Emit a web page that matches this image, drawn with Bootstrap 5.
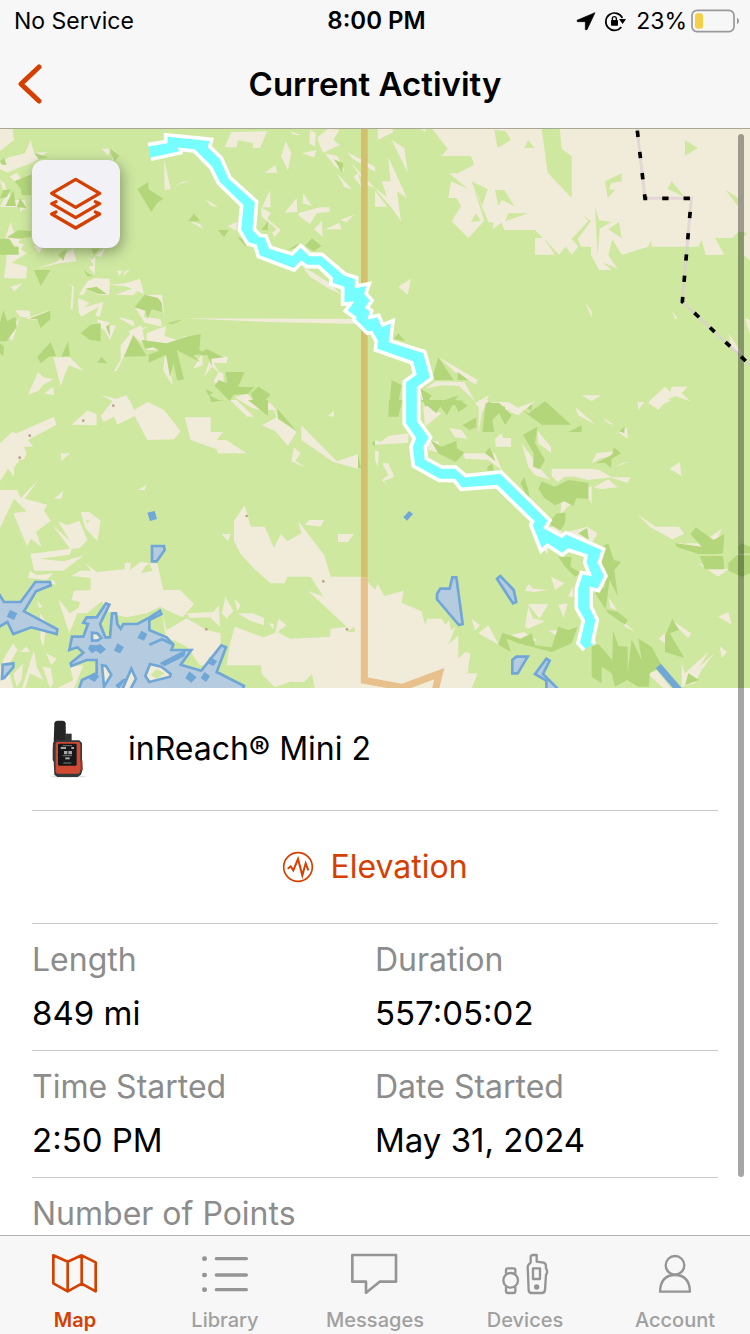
<!DOCTYPE html>
<html lang="en">
<head>
<meta charset="utf-8">
<meta name="viewport" content="width=device-width, initial-scale=1">
<title>Current Activity</title>
<link href="https://cdn.jsdelivr.net/npm/bootstrap@5.3.0/dist/css/bootstrap.min.css" rel="stylesheet">
<style>
  :root { --accent: #d54000; --bar: #f7f7f7; --rule: #c8c8c8; --muted: #8c8c8c; }
  body { font-family: Inter, "Liberation Sans", sans-serif; color: #000; background: #fff; }
  svg { display: block; flex: none; }
  .topbar { background: var(--bar); border-bottom: 1px solid #a9a795; }
  .status-row { display: grid; grid-template-columns: 1fr auto 1fr; height: 40px; padding: 0 11px 0 14px; font-size: 23px; line-height: 42px; }
  .clock { font-size: 24px; }
  .title-row { display: grid; grid-template-columns: 64px 1fr 64px; height: 88px; }
  .title-row h1 { font-size: 33px; line-height: 88px; font-weight: 600; }
  .accent, .accent:hover { color: var(--accent); }
  .plain-btn { background: none; border: 0; padding: 0; }
  .map-view svg.terrain { width: 100%; height: auto; }
  .layers-btn { top: 31px; left: 32px; width: 88px; height: 88px; background: #f2f1f6; border: 0; border-radius: 12px; box-shadow: 2px 4px 14px rgba(0,0,0,.35); }
  .thumb { top: 5px; right: 6px; width: 6px; bottom: 58px; border-radius: 3px; background: rgba(0,0,0,.35); }
  .details { padding: 0 32px; font-size: 32px; line-height: 48px; }
  .ruled { border-bottom: 1px solid var(--rule); }
  .device-row { height: 123px; gap: 24px; }
  .elev-btn { height: 113px; gap: 16px; }
  .stats { margin: 0; padding: 12px 0 13px; }
  .stats dt { font-weight: 400; color: var(--muted); margin-bottom: 5px; }
  .stats dd { margin: 0; font-size: 33px; }
  .tabs { background: var(--bar); border-top: 1px solid #b2b2b2; }
  .tabs a { flex: 1 1 0; padding: 14px 0 2px; gap: 10px; color: #a0a0a0; font-size: 20px; line-height: 24px; font-weight: 500; text-decoration: none; }
  .tabs a svg { color: #959595; }
  .tabs a.active, .tabs a.active svg { color: var(--accent); }
  .tabs a.active { font-weight: 600; }
</style>
</head>
<body>
<div class="d-flex flex-column vh-100">
  <header class="topbar flex-shrink-0">
    <div class="status-row">
      <span>No Service</span>
      <span class="clock fw-semibold">8:00 PM</span>
      <span class="d-flex align-items-center justify-content-end">
        <svg width="20" height="20" viewBox="39 32 60 60"><path d="M96 37 72 88 67 88 67 64 43 64 42 60Z" fill="#000" stroke="#000" stroke-width="2" stroke-linejoin="round"/></svg>
        <svg class="mx-2" width="24" height="24" viewBox="132 25 72 72"><path d="M184 79A26 26 0 1 1 187 52" fill="none" stroke="#000" stroke-width="5"/><path d="M177 55h21l-10 15z"/><rect x="153" y="58" width="21" height="17" rx="2"/><path d="M157 59v-5a6 6 0 0 1 12 0v5" fill="none" stroke="#000" stroke-width="4"/></svg>
        <span>23%</span>
        <svg class="ms-1" width="48" height="24" viewBox="393 23 144 72"><rect x="396" y="27" width="126" height="64" rx="15" fill="none" stroke="#999" stroke-width="5"/><rect x="405" y="36" width="24" height="46" rx="8" fill="#f7cf46"/><path d="M531 49q6 3 6 10t-6 10z" fill="#999"/></svg>
      </span>
    </div>
    <div class="title-row">
      <button class="plain-btn accent ps-3" type="button" aria-label="Back"><svg width="28" height="40" viewBox="0 0 28 40"><path d="M23 3 5 20 23 37" fill="none" stroke="currentColor" stroke-width="5" stroke-linecap="round" stroke-linejoin="round"/></svg></button>
      <h1 class="m-0 text-center">Current Activity</h1>
    </div>
  </header>

  <main class="position-relative flex-grow-1 overflow-hidden">
    <section class="map-view position-relative">
      <svg class="terrain" viewBox="0 0 2250 1677" role="img" aria-label="Map with recorded track">
        <rect width="2250" height="1680" fill="#cee8a0"/>
        <!-- north-west terrain -->
        <g transform="translate(0 -27)">
          <g fill="#f1ebd9">
            <path d="M0 24H37L42 60 0 93ZM0 128 28 112 75 100 92 60 102 98 142 96 96 130 60 142 22 158 0 148ZM304 86 330 86 326 108ZM334 84 358 104 338 122ZM492 116 512 208 494 210ZM512 210 545 186 570 183 540 192ZM615 236 655 261 634 258ZM565 302 600 312 610 327ZM683 318 712 305 708 332Z"/>
            <path d="M694 36 802 34 780 84 758 84 760 70 714 60 710 82 674 82ZM858 64 874 100 864 152 843 108ZM794 158 826 136 832 158ZM810 210 812 262 786 262ZM782 262 812 278 802 296 842 330 824 352 816 338 830 328 786 290ZM854 278 890 234 892 276ZM910 220 936 258 908 250ZM894 280 960 262 988 262 990 276 950 280 930 312 900 290ZM942 328 966 302 968 350ZM975 328 1018 308 1024 328ZM1020 300 1062 284 1040 306ZM906 100 950 90 942 112ZM930 30 948 40 944 80 928 70ZM870 34 902 45 880 44ZM952 52 986 26 1018 30 1000 60 1020 75 970 98 960 78ZM975 100 1012 108 1035 155 1006 140ZM1010 160 1056 208 1034 202ZM1040 95 1125 140 1125 155 1060 118ZM1050 125 1125 205 1100 195ZM1060 170 1075 160 1084 200ZM908 440 940 458 990 490 1022 522 985 505 930 470Z"/>
            <path d="M32 306 44 345 66 350 54 368 72 372 62 390 50 378 18 384 14 360ZM22 392 60 386 80 400 35 428 82 440 78 476 12 474ZM102 378 132 372 118 400ZM106 446 170 425 218 385 230 424 180 430ZM256 400 274 420 316 382 304 410 286 408 284 466 266 440 282 436ZM32 502 68 488 44 514ZM350 452 368 452 358 468ZM366 470 376 452 390 450ZM202 490 222 500 218 570 212 566 216 500ZM236 526 262 484 284 474 330 476 328 524 296 524 258 508 252 524ZM234 534 268 548 254 562 310 545 300 590 286 588 296 560 244 590 236 578ZM326 494 376 490 420 476 432 522 412 514 400 526 344 524 396 506 372 498ZM428 526 486 524 494 596 484 548ZM46 570 90 572 90 594 60 590ZM76 596 150 570 110 600ZM404 560 438 572 430 590 482 598 486 620 434 608ZM356 590 400 602 404 620 360 596ZM290 598 330 608 320 636 300 622ZM306 618 348 616 330 660ZM362 676 392 640 444 618 400 650 350 754 342 752 362 720ZM0 600 10 610 0 622ZM60 590 38 662 20 650ZM160 712 210 712 250 752 206 736 182 798ZM114 756 130 772 160 778 128 796 116 812 84 824ZM160 800 162 826 132 820ZM440 640 498 618 494 648 530 660 560 648 580 690 540 676 490 690 440 690ZM384 634 424 616 438 680ZM494 710 508 710 518 796 490 752ZM580 746 606 700 608 736ZM612 770 636 700 684 712 680 730 640 728 660 760 636 740ZM656 756 670 760 672 798 640 786ZM616 802 638 846 632 840ZM704 832 742 820 780 870 756 864ZM780 846 812 850 830 870 800 870ZM304 826 348 836 380 826 400 868 330 870 342 846Z"/>
            <path d="M550 595 1083 597 1083 612 800 606ZM28 170 50 158 64 176 44 184ZM64 176 92 160 94 226 80 180ZM20 212 44 240 74 240 80 262 60 276 60 262 0 260 14 232ZM0 180 14 190 26 226 12 220Z"/>
          </g>
          <g fill="#b3d67b">
            <path d="M102 98 146 112 116 118ZM44 184 94 162 94 226 66 226 62 206ZM10 210 32 208 20 232 0 234ZM16 258 40 210 48 258ZM50 262 60 234 80 264ZM0 124 12 114 20 134 6 134ZM412 208 444 186 446 208 490 236 472 248 454 276ZM330 84 358 106 344 124 334 104ZM582 280 600 304 565 304ZM654 330 686 330 672 352ZM804 304 804 330 784 330ZM862 390 906 366 904 378ZM936 355 964 378 942 394 915 378ZM1002 118 1030 130 1026 158ZM712 352 740 358 738 380ZM20 352 56 330 94 334 94 350 56 356ZM0 356 28 356 44 382 56 380 56 404 0 404ZM174 404 200 388 190 422ZM274 386 300 386 282 404ZM102 450 152 450 122 498ZM250 450 280 470 262 468ZM256 506 290 500 320 522 296 522ZM404 562 434 524 474 534 486 550 486 576 456 568 442 596 436 572ZM0 606 10 570 22 604 46 590 50 622 20 664 0 664ZM88 596 150 572 152 596 122 624 112 598ZM242 640 272 614 302 610 302 664 270 660ZM318 620 328 612 330 650ZM500 610 548 598 520 612ZM372 710 400 644 440 708ZM424 660 500 670 560 650 602 642 598 690 620 700 580 706 600 726 530 690 552 778 532 782 520 730 510 772 498 704 446 728 446 704 478 692 460 682 436 686ZM598 706 618 686 672 712 634 716 636 740 622 706ZM112 710 152 666 168 708 146 710 122 730ZM184 710 204 664 210 708ZM292 728 304 710 322 730ZM0 670 12 680 10 708 0 700ZM644 798 656 780 682 790 676 756 734 756 714 800 762 802 744 822 700 824 690 844ZM752 820 776 800 812 824 790 846 760 840ZM616 808 640 818 628 826 660 842 636 846Z"/>
          </g>
        </g>
        <!-- north-east terrain -->
        <g transform="translate(1125 -27)">
          <path fill="#f1ebd9" d="M170 24H1125V340L1090 335 1072 354H1020L1048 404 992 406 980 360 970 380H830L828 360 820 380 740 404 712 358 700 406 728 446 682 426 710 450H672L648 404 648 380H618L608 356 648 304 624 284 640 304 590 356 610 380 590 404 572 380 552 404 506 354 540 404H480V354H504L480 330H388L380 308 352 328 356 308 340 306 290 184 328 302 280 354 230 304 258 258 244 234H220L228 184 278 206 222 160 248 160 298 134 288 108H200L218 86Z"/>
          <path fill="#f1ebd9" d="M8 24H50L55 36 8 60ZM130 24H152V36ZM50 60 88 84 98 158ZM40 112 96 234 66 214 78 304 50 264 0 206 0 204 36 232 20 184H46ZM0 212 36 260H0ZM70 500 108 476 98 524ZM630 546 650 574V594ZM890 572 908 596H900ZM1060 640 1105 705 1070 684ZM1106 350 1125 330V422L1106 406ZM1110 594 1125 600V645ZM190 710 308 780 302 794 240 756ZM182 784 268 786 300 844 252 798 200 796 150 806ZM620 826H678L650 844ZM820 846 870 800 886 816 890 800H938L920 820 946 844 900 828 870 844 850 870ZM788 846H808L790 870ZM130 800 180 870H150ZM300 850 342 826 320 870ZM350 846H400L440 870H370Z"/>
          <path fill="#cee8a0" d="M500 24H554L560 86 590 108V234L518 158ZM358 30 392 34 408 60 368 84ZM460 60 478 84H448ZM930 60 968 84 930 108ZM690 184 740 160V184L708 190 702 208 720 210 698 234ZM890 184 930 232 878 206ZM1052 210 1090 235 1088 258ZM290 184 338 208 322 256ZM360 210H388L418 258 380 240 370 258ZM302 280 318 302 288 306ZM400 280 460 280 390 304ZM660 260 672 300 708 306 674 326 668 406ZM700 328 732 306 740 354Z"/>
          <path fill="#b3d67b" d="M190 712 236 780H170ZM248 756 280 780H248ZM50 780 80 796 66 870H42ZM56 656 70 640 90 664ZM136 806 170 826 160 844 190 846 150 860ZM200 844 250 826 240 840 268 842 220 862ZM340 846 390 860V870H336ZM456 866 470 846V870ZM500 850 522 850 506 870Z"/>
        </g>
        <!-- south-west terrain -->
        <g transform="translate(0 813)">
          <path fill="#f1ebd9" d="M340 0H390L402 30 444 6 492 30 542 94 522 118 442 120 404 48 352 74 342 50 310 66 302 48ZM214 74 262 32 290 42V76ZM0 130 36 96 50 100 162 50 170 74 84 120 100 140 72 140 80 160 72 178H60L42 204V230L24 206 0 244ZM182 160H210L184 184ZM0 270H52L62 294 118 236 74 296 142 314 132 332 152 362 108 396 124 440 92 416 82 440 92 464 34 342 90 462 210 446 158 376 210 422 174 364 202 376 238 362 262 420 240 444 214 448 210 464 120 476 190 484 252 466 190 512 102 512 92 464 40 340 80 334 42 296 0 384ZM162 296 190 272 184 296ZM414 270 440 254 434 270ZM242 336H268L302 362 292 424 256 384ZM554 52H632V96H670L660 108 740 160H654L650 148 572 120ZM690 0H710L762 50H742ZM806 0 836 50 890 96 864 138 826 94 786 76 830 52ZM904 76 1010 184 1074 162V206L1000 186 904 120ZM984 48 1002 32V50ZM882 142 902 160 886 182 920 204 874 184ZM664 402H692L684 424ZM734 316 752 380H794L822 444 842 402 862 424 904 400 894 362 972 464 992 530H862L854 550H812L764 508 722 462 702 424V362ZM914 374 928 360H972L962 380ZM1014 402H1062L1044 426H1014ZM932 530H1090L1125 570V865H944L936 822 912 846 870 846 824 862 784 820V796H680L688 740 704 680 790 712 832 696 870 716 990 710 992 686 1040 680 924 572 970 590ZM254 488 290 516 374 508V488H392L390 510 422 486 452 490 472 490 490 570H540L582 612 548 652 520 640 480 620 440 640 380 652 330 640 306 604 260 640H230L240 606 214 600 222 572 272 570V534L214 528 240 512 274 512ZM90 512 110 526 160 520 140 540 84 534ZM134 546 160 540 170 555ZM174 596 210 640 240 620 208 700ZM110 600 128 620 118 624ZM486 640 500 690 560 655 620 690 662 700V734L640 800 600 796 560 740 520 720 500 730ZM560 640 640 636 656 616 660 680 630 652 570 654ZM676 590 700 632 680 656 666 640ZM704 596 722 616 712 634ZM714 640 760 640 792 654V676L750 662ZM806 670 822 672 820 688ZM836 656 860 676 840 690 824 704ZM120 640 140 670 130 740 122 720ZM138 760 170 776 154 796ZM60 756 80 740 90 756ZM0 800 20 760 40 730 52 750 24 800 40 865H0ZM40 822 70 790 64 840 50 860ZM102 750 110 800 130 840 90 820 76 865 66 865ZM128 800 152 804 160 850 150 865ZM210 800 250 796 222 865 170 865 220 840Z"/>
          <path fill="#cee8a0" d="M258 360 270 362 260 370ZM650 120 666 100 684 120ZM1040 696 1064 680V696ZM434 500 448 490 458 512 424 520ZM700 800H760L720 865H680Z"/>
          <path fill="#b3d67b" d="M630 0H672L636 6ZM744 0H804V48ZM832 26 890 94 834 56ZM1074 162 1083 204H1074ZM1115 130 1125 122V140Z"/>
          <g fill="#b5cbe0" stroke="#70a7d7" stroke-width="8">
            <path d="M-10 570 12 606H62L106 546H150L152 556 108 574 72 634 172 688 170 702 94 682 40 702 22 666-10 685Z"/>
            <path d="M6 836 8 794 40 790V802L12 834Z" />
            <path d="M236 870 246 840 290 820V780H260L214 798 212 790 250 758 232 742 208 750 216 710H250L264 672 250 668 260 652H290L318 610 328 614 300 672 316 712H330L336 640H348L352 672 362 686 370 672H412L446 654 480 632 484 642 448 660V690L500 712 520 734 514 750H574L542 794 604 812 664 736 678 742 650 816 732 858 728 870Z"/>
            <path d="M456 438H492L494 450 470 484H456Z"/>
          </g>
          <g fill="#f1ebd9" stroke="#70a7d7" stroke-width="8"><path d="M276 698 292 700 304 714 292 722H276ZM306 796 318 798 334 824 312 860ZM366 870 394 806 408 836 390 870ZM436 828 450 792 484 800 512 822 510 830 448 846Z"/></g>
          <path d="M452 824 470 808 494 820 470 836Z" fill="#cee8a0"/>
          <path d="M448 734 486 718 516 732M482 792 552 756 550 766 490 796" fill="none" stroke="#70a7d7" stroke-width="8"/>
          <g fill="#70a7d7"><path d="M442 338 464 333 471 357 450 363ZM30 630 52 640 42 660 20 650ZM424 692 442 702 432 722 412 714ZM352 730 372 742 360 760 342 752ZM270 734 292 736 300 732 318 748 302 762 288 752 276 760 264 746ZM280 818 298 828 284 846 266 836ZM568 814 590 832 574 848 556 834ZM614 816 630 828 618 846 602 834ZM630 770 652 784 640 798 620 788ZM346 856 368 838 380 834 356 868Z"/></g>
          <g fill="#b89f8a"><circle cx="340" cy="17" r="4"/><circle cx="250" cy="62" r="4"/><circle cx="89" cy="107" r="4"/><circle cx="59" cy="173" r="4"/><circle cx="740" cy="348" r="4"/><circle cx="970" cy="544" r="4"/><circle cx="1041" cy="688" r="4"/><circle cx="619" cy="688" r="4"/></g>
        </g>
        <!-- south-east terrain -->
        <g transform="translate(1125 813)">
          <path fill="#f1ebd9" d="M-20 552 0 570 8 552 28 588 86 572 80 608 140 634 150 674 158 656H200L212 674 222 660 228 690 242 680 220 734 250 706V776L270 756 286 760 278 820H308L290 865H-20ZM0 120 18 126 40 108 100 100V128L0 134ZM22 190H40L58 230 26 244 48 268 20 240 40 226ZM0 150 12 155 8 200 0 180ZM145 20 200 40 150 80ZM155 120 190 125 200 160 160 150ZM222 84 260 90 278 116 240 112ZM312 0 340 0 320 40 310 106ZM360 116 380 100 384 114H408V140H362ZM264 160H360L382 212 340 180 270 176ZM400 34 480 4 430 46ZM456 40 478 30 470 50ZM486 90 528 142V158L490 130ZM440 130 470 170 490 200 526 240 480 226 460 200ZM530 206H650L674 210 710 232 640 240 600 230 570 230 548 246 530 228ZM704 232H768L756 248ZM650 190 664 160 720 154 700 170 674 176ZM700 210 740 190 768 184 720 200ZM656 262 700 238 728 262 700 264 680 268ZM560 300 590 308 556 344ZM884 206 914 186 920 228ZM732 98 756 82 758 116ZM600 20 662 74 610 46ZM680 52 720 76 700 70ZM790 10 804 6 792 26ZM820 10 850 0H890L862 14 852 28ZM786 342 842 380H912L928 402 892 418 826 382ZM510 380 556 380 562 400 600 390 636 380 668 400 650 430 580 410ZM500 440 520 430 518 464ZM528 530 568 550 540 570ZM450 572 460 552 476 566 520 570 476 576ZM458 612H520L494 656ZM460 620 474 655 510 664 460 686 450 680ZM550 614 578 610 566 654ZM290 656 316 676 300 692ZM310 700 340 676 372 734ZM410 704 446 696 486 720 450 734ZM520 692 548 690 546 708ZM700 590 726 630 706 624ZM730 650 778 694 750 680ZM712 690 718 760ZM850 716 870 700V730ZM890 660 948 700 940 715 900 676ZM1030 650 1060 636 1070 674ZM1034 738 1056 756 1040 774ZM970 490 1060 508 1030 530ZM930 430 980 430 1040 386 1020 440 1040 440 1020 455ZM906 428 960 436 920 440ZM920 790 930 820 1000 756 974 800 1018 760 980 810 960 850 920 860ZM816 820 846 812 888 865H866ZM580 590 592 560 596 590ZM658 570 690 572 670 575ZM640 262 650 258V312L640 295Z"/>
          <path fill="#b3d67b" d="M42 0H82L70 50H40ZM136 0H180L240 0 216 46 196 20 184 40ZM238 10 260 4 278 18 250 36ZM332 10 372 8 410 46 390 74 372 40 352 60 358 96H322ZM262 76 304 52V82L284 90ZM440 30 460 40 510 4 540 30 588 74H500ZM444 104 488 80 480 130 510 180 494 208 474 200 476 160ZM580 96 620 76V96ZM734 94 748 80V100ZM166 120 200 140 244 122 246 144 268 158 242 186 190 160ZM344 142 362 184 330 160ZM338 200 352 190 356 212H336ZM448 230 436 250 466 310 460 270ZM490 266 500 244 540 260 580 240 640 248V296L604 294 596 318 568 304 540 316 508 294ZM662 190 712 164 716 142 738 160 710 176 708 204 690 188ZM545 340 572 338 570 370 556 392 520 370ZM636 384 642 420 610 400ZM550 470 590 470 586 500 620 520 600 530 570 500ZM680 440 700 430 716 480 738 486 718 510 728 588 704 540 692 628 728 636 758 660 750 674 700 640 660 580 690 560 680 500ZM962 382 1016 420 1048 402 1044 460 1020 462H970L904 440 902 430 980 440 946 402ZM974 468H1044L1048 508H990ZM1060 490 1085 466 1125 466V520L1100 530 1060 512ZM1090 440 1100 430 1125 440V460L1092 462ZM382 698 436 716 470 700 480 736 530 742 550 680 580 690 608 680 590 730 530 756 430 730 394 716 408 756 370 734ZM650 740 670 732 712 780 714 690 730 738 758 740V820L770 718 800 780 790 716 830 740 860 796 824 820 822 860H790L756 840 720 860 710 820 680 800V850L650 830ZM870 708 892 656 912 690 884 700 928 774 870 756ZM940 820 972 840 930 856Z"/>
          <g fill="#b5cbe0" stroke="#70a7d7" stroke-width="8"><path d="M232 532H244L263 672 252 675 186 598V582L196 566H224ZM366 536 376 528 416 570 424 606 414 610ZM412 780 424 770H458L428 820H412ZM514 776 524 782 504 822 552 870H514V842L480 822Z"/><path d="M85 352 102 333 114 342 96 362Z" fill="#70a7d7" stroke="none"/><path d="M850 798 912 870" stroke-width="20"/></g>
        </g>
        <!-- state line and boundary -->
        <path d="M1093 0V1345" fill="none" stroke="#d4bf6c" stroke-width="20"/>
        <path d="M1093 1345V1654L1208 1675 1318 1634 1304 1690" fill="none" stroke="#e8c08b" stroke-width="21"/>
        <path d="M1911 -5 1935 208H2074L2047 518 2250 708" fill="none" stroke="#dccfd2" stroke-opacity=".7" stroke-width="9"/>
        <path d="M1912 5 1935 208H2074L2047 518 2250 708" fill="none" stroke="#000" stroke-width="11" stroke-dasharray="19 45"/>
        <!-- recorded track: fill, then its two white edges -->
        <path fill="#76fdff" d="M444 47 497 38V17L635 31 629 53 664 87 690 146 770 218 763 301 780 319 798 321 811 355 876 375 902 349 930 376H966L1035 435 1070 446V471L1108 464 1098 493 1116 515 1102 535 1115 545 1110 565 1136 559 1148 588 1179 575 1172 636 1274 668 1296 748 1256 776V875L1292 925 1276 953 1279 989 1325 1014H1367L1397 1040 1503 1029 1650 1174 1637 1195 1685 1221 1698 1211 1811 1260 1798 1300 1818 1341 1796 1385 1773 1379V1433L1792 1473 1778 1538 1786 1543 1752 1563 1734 1543 1750 1475 1729 1438V1378L1744 1331 1768 1335 1754 1300 1758 1280 1705 1263 1687 1278 1642 1249 1623 1266 1592 1187 1598 1178 1490 1073 1383 1081 1363 1055 1317 1054 1240 1011 1233 953 1243 928 1213 885V757L1244 735 1235 701 1126 663 1129 638 1114 611 1102 613 1062 573 1064 566 1036 546 1052 523 1028 525V477L993 466V448L956 413H922L904 401 882 423 775 383 766 351 743 345 718 303 725 230 656 163 632 116 582 66 541 62 543 71 453 91Z"/>
        <g fill="none" stroke="#fff" stroke-width="11">
          <path d="M444 47 497 38V17L635 31 629 53 664 87 690 146 770 218 763 301 780 319 798 321 811 355 876 375 902 349 930 376H966L1035 435 1070 446V471L1108 464 1098 493 1116 515 1102 535 1115 545 1110 565 1136 559 1148 588 1179 575 1172 636 1274 668 1296 748 1256 776V875L1292 925 1276 953 1279 989 1325 1014H1367L1397 1040 1503 1029 1650 1174 1637 1195 1685 1221 1698 1211 1811 1260 1798 1300 1818 1341 1796 1385 1773 1379V1433L1792 1473 1778 1538 1786 1543"/>
          <path d="M1752 1563 1734 1543 1750 1475 1729 1438V1378L1744 1331 1768 1335 1754 1300 1758 1280 1705 1263 1687 1278 1642 1249 1623 1266 1592 1187 1598 1178 1490 1073 1383 1081 1363 1055 1317 1054 1240 1011 1233 953 1243 928 1213 885V757L1244 735 1235 701 1126 663 1129 638 1114 611 1102 613 1062 573 1064 566 1036 546 1052 523 1028 525V477L993 466V448L956 413H922L904 401 882 423 775 383 766 351 743 345 718 303 725 230 656 163 632 116 582 66 541 62 543 71 453 91"/>
        </g>
      </svg>
      <button class="layers-btn position-absolute d-flex align-items-center justify-content-center accent" type="button" aria-label="Map layers">
        <svg width="56" height="56" viewBox="144 168 168 168" fill="none" stroke="currentColor" stroke-width="10" stroke-linejoin="round" stroke-linecap="round"><path d="M227 178 299 220 227 262 155 220ZM168 245 155 251 227 293 299 251 286 245M168 276 155 282 227 324 299 282 286 276"/></svg>
      </button>
    </section>

    <section class="details">
      <div class="device-row ruled d-flex align-items-center">
        <svg width="72" height="72" viewBox="36 39 216 216">
          <ellipse cx="145" cy="230" rx="54" ry="3" fill="#ddd"/>
          <path d="M103 70q1-8 8-8h18q7 0 8 8l1 60h-37z" fill="#252525"/><path d="M136 101h19v24h-19z" fill="#333"/>
          <path d="M99 128 108 121H178L186 129V176L188 208 183 224 173 231H112L103 224 101 185 98 180V150Z" fill="#333a3b"/>
          <path d="M180 182h7v28h-7z" fill="#9e3325"/>
          <rect x="107" y="126" width="74" height="95" rx="7" fill="#d04a33"/>
          <rect x="114" y="131" width="56" height="66" rx="4" fill="#151719"/>
          <path d="M128 137h28M128 167h28" stroke="#777" stroke-width="3"/><path d="M122 144h16M154 144h8" stroke="#a4a8a8" stroke-width="6"/><path d="M132 158h10M145 158h11" stroke="#a4a8a8" stroke-width="10"/><path d="M136 175h13" stroke="#aaa" stroke-width="6"/><path d="M130 189h24" stroke="#666" stroke-width="4"/>
        </svg>
        <span>inReach® Mini 2</span>
      </div>
      <button class="plain-btn elev-btn ruled accent d-flex align-items-center justify-content-center w-100" type="button">
        <svg width="32" height="32" viewBox="786 453 96 96" fill="none" stroke="currentColor"><circle cx="834" cy="501" r="43" stroke-width="5"/><path d="M803 506 812 499 820 511 834 477 847 526 857 490 865 511" stroke-width="6"/></svg>
        <span>Elevation</span>
      </button>
      <dl class="stats ruled row g-0">
        <div class="col-6"><dt>Length</dt><dd>849 mi</dd></div>
        <div class="col-6"><dt>Duration</dt><dd>557:05:02</dd></div>
      </dl>
      <dl class="stats ruled row g-0">
        <div class="col-6"><dt>Time Started</dt><dd>2:50 PM</dd></div>
        <div class="col-6"><dt>Date Started</dt><dd>May 31, 2024</dd></div>
      </dl>
      <dl class="stats row g-0">
        <div class="col-6"><dt>Number of Points</dt></div>
      </dl>
    </section>
    <span class="thumb position-absolute"></span>
  </main>

  <nav class="tabs d-flex flex-shrink-0" aria-label="Main">
    <a href="#map" class="active d-flex flex-column align-items-center" aria-current="page">
      <svg width="48" height="48" viewBox="153 60 144 144" fill="none" stroke="currentColor" stroke-width="8" stroke-linejoin="round"><path d="M160 76 203 95 245 76 287 97V184L245 161 203 184 160 160ZM203 95V184M245 76V161"/></svg>
      <span>Map</span></a>
    <a href="#library" class="d-flex flex-column align-items-center">
      <svg width="48" height="48" viewBox="603 60 144 144" fill="none" stroke="currentColor" stroke-linecap="round"><path d="M649 86H739M649 135H739M649 179H739" stroke-width="10"/><path d="M613 86h1M613 135h1M613 179h1" stroke-width="14"/></svg>
      <span>Library</span></a>
    <a href="#messages" class="d-flex flex-column align-items-center">
      <svg width="48" height="48" viewBox="1053 60 144 144" fill="none" stroke="currentColor" stroke-width="8" stroke-linejoin="round"><path d="M1057 75H1188V155H1139L1098 188V155H1057Z"/></svg>
      <span>Messages</span></a>
    <a href="#devices" class="d-flex flex-column align-items-center">
      <svg width="48" height="48" viewBox="378 60 144 144" fill="none" stroke="currentColor" stroke-width="7" stroke-linejoin="round"><circle cx="407" cy="151" r="22"/><path d="M393 131V120Q393 115 398 115H416Q421 115 421 120V131M393 171V183Q393 189 398 189H416Q421 189 421 183V171M467 100V80Q468 75 474 75H485V95L506 98Q513 100 513 110V116L516 120V130L513 134 510 180Q509 189 500 189H470Q461 189 461 180L458 110Q459 103 467 98M474 115H495V147H474Z"/><circle cx="485" cy="171" r="8" fill="currentColor" stroke="none"/></svg>
      <span>Devices</span></a>
    <a href="#account" class="d-flex flex-column align-items-center">
      <svg width="48" height="48" viewBox="828 60 144 144" fill="none" stroke="currentColor" stroke-width="7" stroke-linejoin="round"><circle cx="900" cy="106" r="28"/><path d="M855 185Q857 135 900 135T945 185Z"/></svg>
      <span>Account</span></a>
  </nav>
</div>
<script src="https://cdn.jsdelivr.net/npm/bootstrap@5.3.0/dist/js/bootstrap.bundle.min.js"></script>
</body>
</html>
